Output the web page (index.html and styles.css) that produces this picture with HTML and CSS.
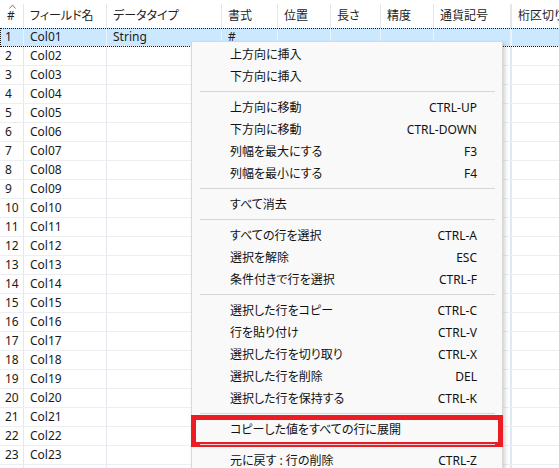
FILE: index.html
```html
<!DOCTYPE html>
<html lang="ja">
<head>
    <meta charset="UTF-8">
    <title>フィールド定義</title>
    <link rel="stylesheet" href="styles.css">
</head>
<body>
    <div class="grid">
        <div class="row head">
            <div class="cell num"><svg class="sort" width="7" height="5" viewBox="0 0 7 5"><path d="M0.5 4.5 L3.5 1 L6.5 4.5" fill="none" stroke="#777" stroke-width="1"/></svg>#</div>
            <div class="cell">フィールド名</div>
            <div class="cell">データタイプ</div>
            <div class="cell">書式</div>
            <div class="cell">位置</div>
            <div class="cell">長さ</div>
            <div class="cell">精度</div>
            <div class="cell">通貨記号</div>
            <div class="cell">桁区切り</div>
        </div>
        <div class="row selected"><div class="cell num">1</div><div class="cell">Col01</div><div class="cell">String</div><div class="cell">#</div><div class="cell"></div><div class="cell"></div><div class="cell"></div><div class="cell"></div><div class="cell"></div></div>
        <div class="row"><div class="cell num">2</div><div class="cell">Col02</div><div class="cell"></div><div class="cell"></div><div class="cell"></div><div class="cell"></div><div class="cell"></div><div class="cell"></div><div class="cell"></div></div>
        <div class="row"><div class="cell num">3</div><div class="cell">Col03</div><div class="cell"></div><div class="cell"></div><div class="cell"></div><div class="cell"></div><div class="cell"></div><div class="cell"></div><div class="cell"></div></div>
        <div class="row"><div class="cell num">4</div><div class="cell">Col04</div><div class="cell"></div><div class="cell"></div><div class="cell"></div><div class="cell"></div><div class="cell"></div><div class="cell"></div><div class="cell"></div></div>
        <div class="row"><div class="cell num">5</div><div class="cell">Col05</div><div class="cell"></div><div class="cell"></div><div class="cell"></div><div class="cell"></div><div class="cell"></div><div class="cell"></div><div class="cell"></div></div>
        <div class="row"><div class="cell num">6</div><div class="cell">Col06</div><div class="cell"></div><div class="cell"></div><div class="cell"></div><div class="cell"></div><div class="cell"></div><div class="cell"></div><div class="cell"></div></div>
        <div class="row"><div class="cell num">7</div><div class="cell">Col07</div><div class="cell"></div><div class="cell"></div><div class="cell"></div><div class="cell"></div><div class="cell"></div><div class="cell"></div><div class="cell"></div></div>
        <div class="row"><div class="cell num">8</div><div class="cell">Col08</div><div class="cell"></div><div class="cell"></div><div class="cell"></div><div class="cell"></div><div class="cell"></div><div class="cell"></div><div class="cell"></div></div>
        <div class="row"><div class="cell num">9</div><div class="cell">Col09</div><div class="cell"></div><div class="cell"></div><div class="cell"></div><div class="cell"></div><div class="cell"></div><div class="cell"></div><div class="cell"></div></div>
        <div class="row"><div class="cell num">10</div><div class="cell">Col10</div><div class="cell"></div><div class="cell"></div><div class="cell"></div><div class="cell"></div><div class="cell"></div><div class="cell"></div><div class="cell"></div></div>
        <div class="row"><div class="cell num">11</div><div class="cell">Col11</div><div class="cell"></div><div class="cell"></div><div class="cell"></div><div class="cell"></div><div class="cell"></div><div class="cell"></div><div class="cell"></div></div>
        <div class="row"><div class="cell num">12</div><div class="cell">Col12</div><div class="cell"></div><div class="cell"></div><div class="cell"></div><div class="cell"></div><div class="cell"></div><div class="cell"></div><div class="cell"></div></div>
        <div class="row"><div class="cell num">13</div><div class="cell">Col13</div><div class="cell"></div><div class="cell"></div><div class="cell"></div><div class="cell"></div><div class="cell"></div><div class="cell"></div><div class="cell"></div></div>
        <div class="row"><div class="cell num">14</div><div class="cell">Col14</div><div class="cell"></div><div class="cell"></div><div class="cell"></div><div class="cell"></div><div class="cell"></div><div class="cell"></div><div class="cell"></div></div>
        <div class="row"><div class="cell num">15</div><div class="cell">Col15</div><div class="cell"></div><div class="cell"></div><div class="cell"></div><div class="cell"></div><div class="cell"></div><div class="cell"></div><div class="cell"></div></div>
        <div class="row"><div class="cell num">16</div><div class="cell">Col16</div><div class="cell"></div><div class="cell"></div><div class="cell"></div><div class="cell"></div><div class="cell"></div><div class="cell"></div><div class="cell"></div></div>
        <div class="row"><div class="cell num">17</div><div class="cell">Col17</div><div class="cell"></div><div class="cell"></div><div class="cell"></div><div class="cell"></div><div class="cell"></div><div class="cell"></div><div class="cell"></div></div>
        <div class="row"><div class="cell num">18</div><div class="cell">Col18</div><div class="cell"></div><div class="cell"></div><div class="cell"></div><div class="cell"></div><div class="cell"></div><div class="cell"></div><div class="cell"></div></div>
        <div class="row"><div class="cell num">19</div><div class="cell">Col19</div><div class="cell"></div><div class="cell"></div><div class="cell"></div><div class="cell"></div><div class="cell"></div><div class="cell"></div><div class="cell"></div></div>
        <div class="row"><div class="cell num">20</div><div class="cell">Col20</div><div class="cell"></div><div class="cell"></div><div class="cell"></div><div class="cell"></div><div class="cell"></div><div class="cell"></div><div class="cell"></div></div>
        <div class="row"><div class="cell num">21</div><div class="cell">Col21</div><div class="cell"></div><div class="cell"></div><div class="cell"></div><div class="cell"></div><div class="cell"></div><div class="cell"></div><div class="cell"></div></div>
        <div class="row"><div class="cell num">22</div><div class="cell">Col22</div><div class="cell"></div><div class="cell"></div><div class="cell"></div><div class="cell"></div><div class="cell"></div><div class="cell"></div><div class="cell"></div></div>
        <div class="row"><div class="cell num">23</div><div class="cell">Col23</div><div class="cell"></div><div class="cell"></div><div class="cell"></div><div class="cell"></div><div class="cell"></div><div class="cell"></div><div class="cell"></div></div>
        <div class="row"><div class="cell num"></div><div class="cell"></div><div class="cell"></div><div class="cell"></div><div class="cell"></div><div class="cell"></div><div class="cell"></div><div class="cell"></div><div class="cell"></div></div>
    </div>

    <!-- context menu for the field grid -->
    <div class="menu">
        <div class="item"><span>上方向に挿入</span></div>
        <div class="item"><span>下方向に挿入</span></div>
        <div class="sep"></div>
        <div class="item"><span>上方向に移動</span><span class="key">CTRL-UP</span></div>
        <div class="item"><span>下方向に移動</span><span class="key">CTRL-DOWN</span></div>
        <div class="item"><span>列幅を最大にする</span><span class="key">F3</span></div>
        <div class="item"><span>列幅を最小にする</span><span class="key">F4</span></div>
        <div class="sep"></div>
        <div class="item"><span>すべて消去</span></div>
        <div class="sep"></div>
        <div class="item"><span>すべての行を選択</span><span class="key">CTRL-A</span></div>
        <div class="item"><span>選択を解除</span><span class="key">ESC</span></div>
        <div class="item"><span>条件付きで行を選択</span><span class="key">CTRL-F</span></div>
        <div class="sep"></div>
        <div class="item"><span>選択した行をコピー</span><span class="key">CTRL-C</span></div>
        <div class="item"><span>行を貼り付け</span><span class="key">CTRL-V</span></div>
        <div class="item"><span>選択した行を切り取り</span><span class="key">CTRL-X</span></div>
        <div class="item"><span>選択した行を削除</span><span class="key">DEL</span></div>
        <div class="item"><span>選択した行を保持する</span><span class="key">CTRL-K</span></div>
        <div class="sep"></div>
        <div class="item marked"><span>コピーした値をすべての行に展開</span></div>
        <div class="sep"></div>
        <div class="item"><span class="plain">元に戻す : 行の削除</span><span class="key">CTRL-Z</span></div>
    </div>
</body>
</html>
```

FILE: styles.css
```css
html, body { margin: 0; padding: 0; overflow: hidden; height: 100%; }
body { font-family: "Noto Sans", "Noto Sans CJK JP", sans-serif; font-size: 12px; color: #1a1a1a; background: #fff; font-feature-settings: "palt"; position: relative; }

.grid { width: 600px; }
.row { display: grid; grid-template-columns: 24px 83px 115px 56px 53px 50px 53px 78px 88px; height: 19px; box-sizing: border-box; border-bottom: 1px solid #eceef2; }
.cell { border-right: 1px solid #e4e8ee; padding-left: 6px; line-height: 18px; white-space: nowrap; overflow: hidden; }
.cell.num { padding-left: 5px; }
.cell:nth-child(8) { border-right: 2px solid #dfe8f3; }

.row.head { height: 28px; border-bottom: none; }
.row.head .cell { margin-top: 4px; line-height: 24px; border-right-color: #e6e6e6; color: #222; }
.row.head .num { position: relative; padding-left: 7px; }
.sort { position: absolute; left: 9px; top: 0; }

.row.selected { background: #cce8ff; outline: 1px dotted #1a1a1a; outline-offset: -1px; }
.row.selected .cell { border-right-color: #e9f3fc; }

.menu { position: absolute; left: 191px; top: 41px; width: 312px; height: 460px; box-sizing: border-box; background: #f9f9f9; border: 1px solid #d9d9d9; box-shadow: 2px 2px 4px rgba(0,0,0,0.18); padding: 1px 0; }
.item { position: relative; display: flex; justify-content: space-between; align-items: center; height: 22px; padding: 0 25px 0 38px; color: #111; }
.sep { height: 9px; position: relative; }
.sep::after { content: ""; position: absolute; left: 8px; right: 7px; top: 4px; height: 1px; background: #d6d6d6; }
.item.marked::after { content: ""; position: absolute; left: -1px; right: -1px; top: -3px; bottom: -7px; border: 5px solid #ec1c24; }
.plain { white-space: pre; }
```
